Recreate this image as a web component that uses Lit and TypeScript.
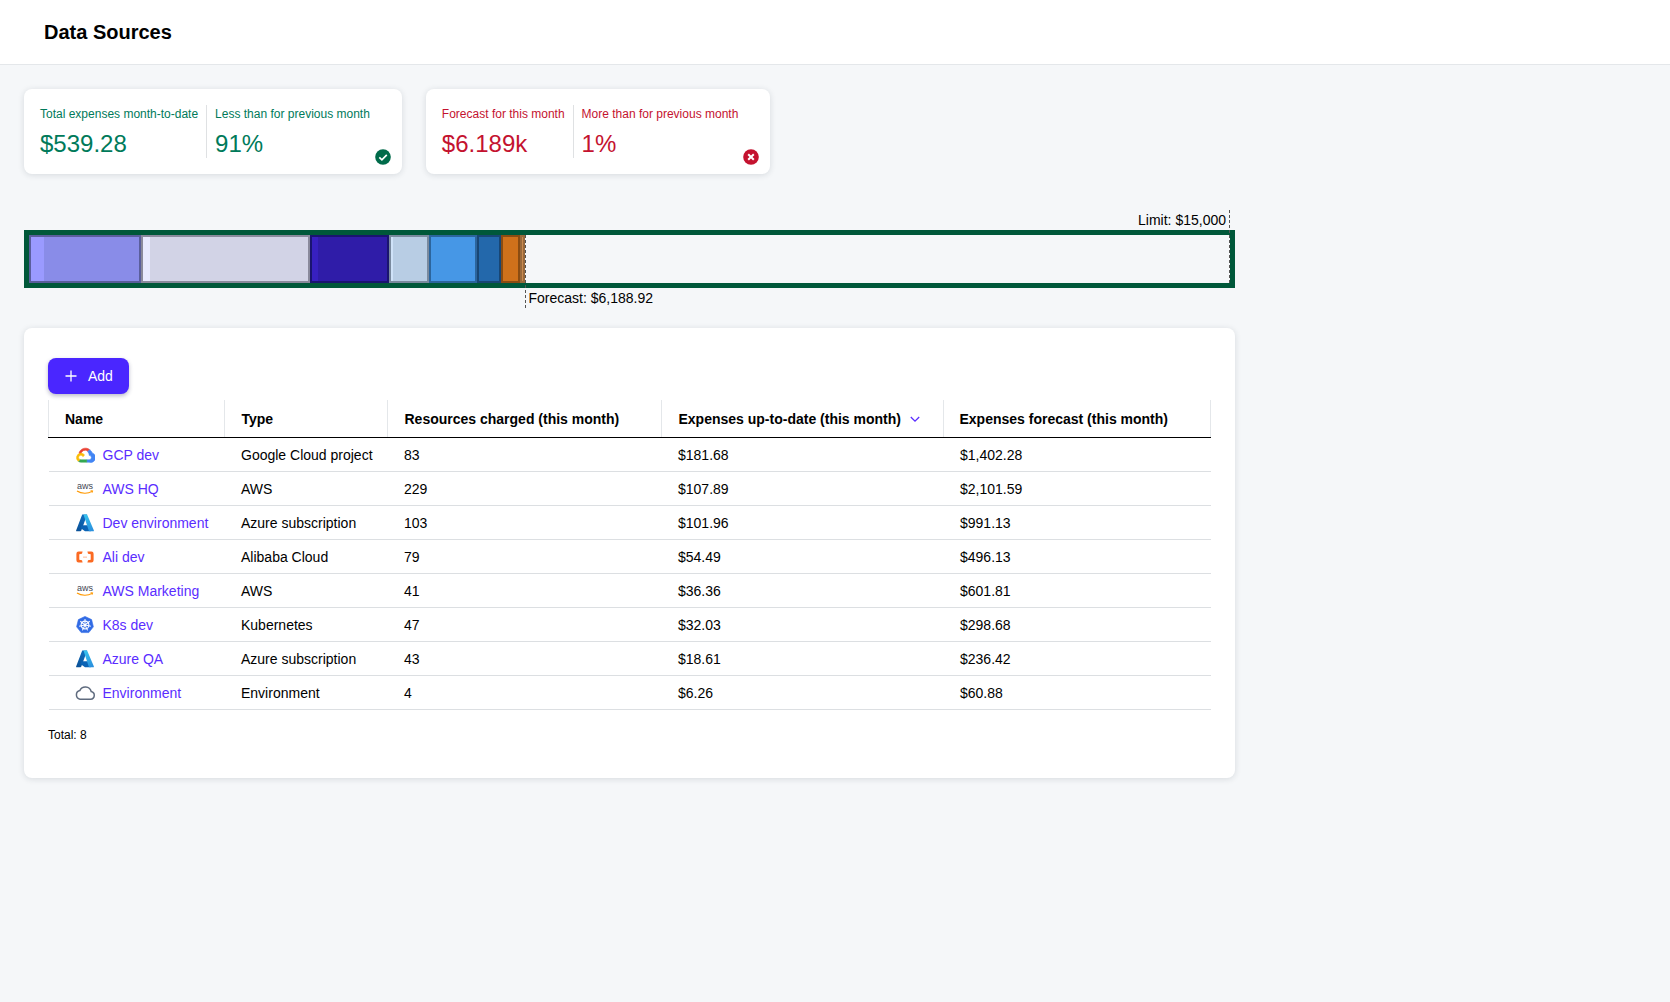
import { LitElement, html, css, svg } from "lit";
import { customElement } from "lit/decorators.js";

const SANS = css(['"Liberation Sans", Arial, sans-serif'] as unknown as TemplateStringsArray);

const gcp = html`<svg width="20" height="20" viewBox="0 0 24 24" fill="none" stroke-width=".7">
  <path d="M15.600 7.600 17.600 5.600A8 8 0 0 0 4.800 9.700L7.200 11.700A5 5 0 0 1 15.600 7.600Z" fill="#ea4335" stroke="#ea4335"/>
  <path d="M20.700 9.500A8.200 8.200 0 0 0 17.600 5.600L15.200 8A5 5 0 0 1 17 11.800V12.400A2.700 2.700 0 0 1 17 17.800H14V20.600H17A5.400 5.400 0 0 0 20.700 9.500Z" fill="#4285f4" stroke="#4285f4"/>
  <path d="M7 20.600H14V17.800H7A2.600 2.600 0 0 1 6 17.500L4 19.500A5.400 5.400 0 0 0 7 20.600Z" fill="#34a853" stroke="#34a853"/>
  <path d="M7 9.800A5.400 5.400 0 0 0 4 19.500L6 17.500A2.700 2.700 0 1 1 9.500 14L11.500 12A5.400 5.400 0 0 0 7 9.800Z" fill="#fbbc05" stroke="#fbbc05"/>
</svg>`;

const aws = html`<svg width="18" height="18" viewBox="0 0 18 18">
  <text class="awstext" x="9" y="8.500" text-anchor="middle">aws</text>
  <path d="M1 11C5.500 14 12 14 16 11.400" fill="none" stroke="#f90" stroke-width="1.100"/>
  <path d="M14.600 10.700 16.800 10.800 16 12.800" fill="none" stroke="#f90" stroke-width="0.900"/>
</svg>`;

const azure = (id: string) => html`<svg width="18" height="18" viewBox="0 0 18 18">
  <defs>
    <linearGradient id="${id}a" x1="0" y1="1" x2="0.5" y2="0"><stop offset="0" stop-color="#0a4f94"/><stop offset="1" stop-color="#0f6cbd"/></linearGradient>
    <linearGradient id="${id}b" x1="0.3" y1="0" x2="0.7" y2="1"><stop offset="0" stop-color="#37c2ee"/><stop offset="1" stop-color="#2a90dd"/></linearGradient>
  </defs>
  <path d="M6.200 .6H11.200L5.200 16.800A.9.9 0 0 1 4.400 17.300H.9A.8.8 0 0 1 .2 16.200Z" fill="url(#${id}a)"/>
  <path d="M12.800 11.200H5.600L4.500 14 9 17.300H14.800Z" fill="#0b63b5"/>
  <path d="M10.900 .6H6.800L7.600 .8 12.800 16.800A.9.9 0 0 0 13.600 17.300H17A.8.8 0 0 0 17.800 16.200L11.300 1Z" fill="url(#${id}b)"/>
</svg>`;

const ali = html`<svg width="18" height="18" viewBox="0 0 18 18">
  <path d="M6.600 3.500H2.600A2.200 2.200 0 0 0 .4 5.700V12.300A2.200 2.200 0 0 0 2.600 14.500H6.600L6 12.300 3.300 11.700V6.300L6 5.700Z" fill="#fb6a22"/>
  <path d="M11.400 3.500H15.400A2.200 2.200 0 0 1 17.600 5.700V12.300A2.200 2.200 0 0 1 15.400 14.500H11.400L12 12.300 14.700 11.700V6.300L12 5.700Z" fill="#fb6a22"/>
  <rect x="7" y="8.700" width="4" height="0.8" fill="#fb6a22" opacity=".6"/>
</svg>`;

const k8sSpokes = [0, 51.4, 102.8, 154.3, 205.7, 257.1, 308.6];
const k8s = html`<svg width="18" height="18" viewBox="0 0 18 18">
  <path d="M9 .4 15.600 3.600 17.400 10.800 12.800 16.600H5.200L.6 10.800 2.400 3.600Z" fill="#326ce5" stroke="#326ce5" stroke-width=".6" stroke-linejoin="round"/>
  <circle cx="9" cy="9" r="3.900" fill="none" stroke="#fff" stroke-width="1.100"/>
  <circle cx="9" cy="9" r="1" fill="#fff"/>
  ${k8sSpokes.map((a) => svg`<path d="M9 9V3" stroke="#fff" stroke-width="1" transform="rotate(${a} 9 9)"/>`)}
</svg>`;

const cloud = html`<svg width="22" height="18" viewBox="0 0 22 18">
  <path d="M6 15.200H16.600A3.900 3.900 0 0 0 17.200 7.500 6.100 6.100 0 0 0 5.800 6.600 4.400 4.400 0 0 0 6 15.200Z" fill="none" stroke="#5f6b7e" stroke-width="1.500"/>
</svg>`;

interface Row { icon: unknown; name: string; type: string; res: string; up: string; fc: string; }
const rows: Row[] = [
  { icon: gcp, name: "GCP dev", type: "Google Cloud project", res: "83", up: "$181.68", fc: "$1,402.28" },
  { icon: aws, name: "AWS HQ", type: "AWS", res: "229", up: "$107.89", fc: "$2,101.59" },
  { icon: azure("az1"), name: "Dev environment", type: "Azure subscription", res: "103", up: "$101.96", fc: "$991.13" },
  { icon: ali, name: "Ali dev", type: "Alibaba Cloud", res: "79", up: "$54.49", fc: "$496.13" },
  { icon: aws, name: "AWS Marketing", type: "AWS", res: "41", up: "$36.36", fc: "$601.81" },
  { icon: k8s, name: "K8s dev", type: "Kubernetes", res: "47", up: "$32.03", fc: "$298.68" },
  { icon: azure("az2"), name: "Azure QA", type: "Azure subscription", res: "43", up: "$18.61", fc: "$236.42" },
  { icon: cloud, name: "Environment", type: "Environment", res: "4", up: "$6.26", fc: "$60.88" },
];

interface Seg { w: number; lw: number; fill: string; light: string; border: string; }
const segs: Seg[] = [
  { w: 112, lw: 13, fill: "#898ce8", light: "#9a9aff", border: "#5a5e9c" },
  { w: 169, lw: 7, fill: "#d2d3e6", light: "#e8eaff", border: "#8a8a9c" },
  { w: 79, lw: 6, fill: "#2f1ca8", light: "#3720c0", border: "#1a1470" },
  { w: 40, lw: 2, fill: "#b8cde4", light: "#cfe2f8", border: "#7a8a9e" },
  { w: 48, lw: 0, fill: "#4697e6", light: "#4697e6", border: "#2c659d" },
  { w: 24, lw: 0, fill: "#2368ab", light: "#2368ab", border: "#184674" },
  { w: 19, lw: 0, fill: "#cf711b", light: "#cf711b", border: "#8a4c12" },
  { w: 5, lw: 1, fill: "#c88a50", light: "#c88a50", border: "#99693c" },
];

@customElement("app-root")
export class AppRoot extends LitElement {
  static styles = css`
    :host { display: block; min-height: 1002px; background: #f5f7f9; font-family: ${SANS}; color: #000; }
    header { height: 64px; background: #fff; border-bottom: 1px solid #e4e7ea; display: flex; align-items: center; padding-left: 44px; font-size: 20px; font-weight: 700; }
    main { width: 1211px; padding: 24px; display: flex; flex-direction: column; }
    .cards { display: flex; gap: 24px; }
    .card { position: relative; display: flex; background: #fff; border-radius: 8px; padding: 16px 32px 16px 16px; box-shadow: 0 1px 6px rgba(30, 40, 60, .14); }
    .good { color: #007a5a; }
    .bad { color: #c4122f; }
    .stat { display: flex; flex-direction: column; }
    .stat + .stat { border-left: 1px solid #dfe1e3; padding-left: 8px; }
    .stat:first-child { padding-right: 8px; }
    .lbl { font-size: 12px; line-height: 16px; white-space: nowrap; margin-top: 1px; }
    .val { font-size: 24px; line-height: 28px; margin-top: 8px; }
    .badge { position: absolute; right: 11px; bottom: 9px; width: 16px; height: 16px; }
    .bar-wrap { position: relative; margin-top: 56px; }
    .bar { height: 58px; box-sizing: border-box; border: 5px solid #00583a; display: flex; }
    .seg { box-sizing: border-box; height: 48px; border-width: 2px; border-style: solid; display: flex; flex: none; }
    .seg i { display: block; flex: none; height: 100%; }
    .limit { position: absolute; right: 9px; top: -20px; font-size: 14px; line-height: 20px; }
    .limit-line { position: absolute; left: 1205px; top: -20px; height: 73px; border-left: 1px dashed #555; }
    .fc-line { position: absolute; left: 501px; top: 5px; height: 73px; border-left: 1px dashed #555; }
    .fc { position: absolute; left: 504.5px; top: 58px; font-size: 14px; line-height: 20px; white-space: nowrap; }
    .panel { margin-top: 40px; background: #fff; border-radius: 8px; padding: 30px 24px 36px; box-shadow: 0 1px 6px rgba(30, 40, 60, .14); }
    .add { width: 81px; height: 36px; box-sizing: border-box; border: 0; border-radius: 8px; background: #4a26ff; color: #fff; font: 14px ${SANS}; display: flex; align-items: center; gap: 11px; padding: 0 0 0 17px; box-shadow: 0 2px 4px rgba(30, 30, 80, .3); }
    table { margin-top: 6px; width: 1163px; border-collapse: collapse; table-layout: fixed; font-size: 14px; }
    th { height: 37px; padding: 0 0 0 16.5px; text-align: left; font-weight: 700; border-bottom: 1px solid #000; border-left: 1px solid #e4e7ea; white-space: nowrap; }
    th:first-child { padding-left: 16px; }
    th:last-child { border-right: 1px solid #e4e7ea; padding-left: 15.5px; }
    td { height: 33px; padding: 0 0 0 16.5px; border-bottom: 1px solid #dcdfe2; white-space: nowrap; }
    td.first { padding-left: 27px; }
    th.sorted svg { margin-left: 7px; vertical-align: -2px; }
    .name { display: flex; align-items: center; gap: 9px; }
    .ic { width: 18px; height: 18px; display: flex; justify-content: center; align-items: center; flex: none; }
    .ic svg { flex: none; }
    .awstext { font: 9px ${SANS}; fill: #3f4754; }
    a { color: #5a2dff; text-decoration: none; }
    .total { margin-top: 18px; font-size: 12px; line-height: 14px; }
  `;

  render() {
    return html`
      <header>Data Sources</header>
      <main>
        <div class="cards">
          <section class="card good">
            <div class="stat"><div class="lbl">Total expenses month-to-date</div><div class="val">$539.28</div></div>
            <div class="stat"><div class="lbl">Less than for previous month</div><div class="val">91%</div></div>
            <svg class="badge" viewBox="0 0 16 16"><circle cx="8" cy="8" r="7.800" fill="#006b4a"/><path d="M4.300 8.300 6.900 10.800 11.800 5.900" fill="none" stroke="#fff" stroke-width="1.700"/></svg>
          </section>
          <section class="card bad">
            <div class="stat"><div class="lbl">Forecast for this month</div><div class="val">$6.189k</div></div>
            <div class="stat"><div class="lbl">More than for previous month</div><div class="val">1%</div></div>
            <svg class="badge" viewBox="0 0 16 16"><circle cx="8" cy="8" r="7.800" fill="#c4122f"/><path d="M5.200 5.200 10.800 10.800M10.800 5.200 5.200 10.800" fill="none" stroke="#fff" stroke-width="2"/></svg>
          </section>
        </div>

        <div class="bar-wrap">
          <div class="limit">Limit: $15,000</div>
          <div class="limit-line"></div>
          <div class="bar">
            ${segs.map((s) => html`<div class="seg" style="width:${s.w}px;background:${s.fill};border-color:${s.border}"><i style="width:${s.lw}px;background:${s.light}"></i></div>`)}
          </div>
          <div class="fc-line"></div>
          <div class="fc">Forecast: $6,188.92</div>
        </div>

        <section class="panel">
          <button class="add">
            <svg width="12" height="12" viewBox="0 0 12 12"><path d="M6 .5V11.500M.5 6H11.500" stroke="#fff" stroke-width="1.300"/></svg>
            Add
          </button>
          <table>
            <colgroup><col style="width:176px"/><col style="width:163px"/><col style="width:274px"/><col style="width:282px"/><col/></colgroup>
            <thead><tr>
              <th>Name</th><th>Type</th><th>Resources charged (this month)</th>
              <th class="sorted">Expenses up-to-date (this month)<svg width="14" height="14" viewBox="0 0 14 14"><path d="M2.800 5 7 9.200 11.200 5" fill="none" stroke="#5a2dff" stroke-width="1.300"/></svg></th>
              <th>Expenses forecast (this month)</th>
            </tr></thead>
            <tbody>
              ${rows.map((r) => html`<tr>
                <td class="first"><div class="name"><span class="ic">${r.icon}</span><a href="#">${r.name}</a></div></td>
                <td>${r.type}</td><td>${r.res}</td><td>${r.up}</td><td>${r.fc}</td>
              </tr>`)}
            </tbody>
          </table>
          <div class="total">Total: 8</div>
        </section>
      </main>
    `;
  }
}
